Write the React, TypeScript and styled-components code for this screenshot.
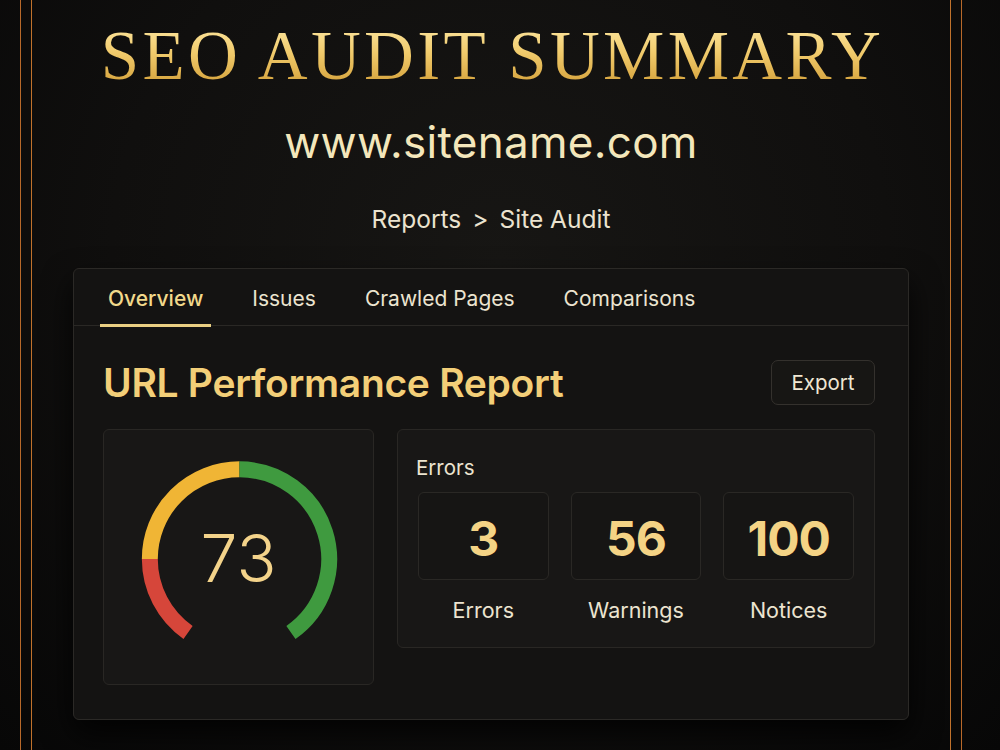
import styled, { createGlobalStyle } from "styled-components";

const GlobalStyle = createGlobalStyle`
  html, body {
    margin: 0;
    padding: 0;
    background: #0a0909;
  }
  body {
    font-family: Inter, "Noto Sans", "Liberation Sans", sans-serif;
  }
`;

const Page = styled.div`
  width: 1000px;
  height: 750px;
  overflow: hidden;
  background: radial-gradient(ellipse at 50% 35%, #171614 0%, #100f0e 55%, #070707 100%);
`;

const OuterFrame = styled.div`
  margin-left: 20px;
  width: 940px;
  height: 750px;
  border-left: 1.5px solid #b8692a;
  border-right: 1.5px solid #b8692a;
`;

const InnerFrame = styled.div`
  margin: 0 10px;
  height: 750px;
  border-left: 1.5px solid #c0722c;
  border-right: 1.5px solid #c0722c;
  display: flex;
  flex-direction: column;
  align-items: center;
`;

const Title = styled.h1`
  margin: 21px 0 0;
  font-family: "Liberation Serif", "DejaVu Serif", serif;
  font-weight: 400;
  font-size: 69px;
  line-height: 70px;
  letter-spacing: 3.3px;
  padding-left: 3px;
  background: linear-gradient(180deg, #fde9a6 0%, #f1cb6c 45%, #cf9a32 100%);
  -webkit-background-clip: text;
  background-clip: text;
  color: transparent;
`;

const SiteName = styled.div`
  margin-top: 26px;
  font-size: 44px;
  line-height: 50px;
  color: #f4e7bb;
  letter-spacing: 0.3px;
`;

const Crumbs = styled.div`
  margin-top: 37px;
  font-size: 24.5px;
  line-height: 30px;
  color: #ebe3cf;
  display: flex;
  gap: 11px;
`;

const Card = styled.div`
  margin-top: 34px;
  width: 836px;
  height: 452px;
  box-sizing: border-box;
  background: #141312;
  border: 1px solid #2b2926;
  border-radius: 6px;
  box-shadow: 0 14px 30px rgba(0, 0, 0, 0.8);
  display: flex;
  flex-direction: column;
`;

const TabBar = styled.div`
  display: flex;
  gap: 33px;
  padding: 0 26px;
  height: 56px;
  align-items: stretch;
  border-bottom: 1px solid #2a2825;
`;

const Tab = styled.div<{ $active?: boolean }>`
  display: flex;
  align-items: center;
  padding: 3px 8px 0;
  font-size: 21px;
  color: ${(p) => (p.$active ? "#f2d98b" : "#ece4d0")};
  font-weight: ${(p) => (p.$active ? 500 : 400)};
  border-bottom: 3px solid ${(p) => (p.$active ? "#e9cf82" : "transparent")};
  margin-bottom: -2px;
`;

const Body = styled.div`
  padding: 33px 33px 0 29px;
  display: flex;
  flex-direction: column;
`;

const HeadRow = styled.div`
  display: flex;
  justify-content: space-between;
  align-items: center;
`;

const Heading = styled.h2`
  margin: 0;
  font-size: 39px;
  font-weight: 600;
  color: #f3cf78;
  letter-spacing: -0.3px;
`;

const ExportButton = styled.button`
  width: 104px;
  height: 45px;
  background: #171614;
  border: 1px solid #34312d;
  border-radius: 7px;
  color: #efe7d3;
  font-family: inherit;
  font-size: 20.5px;
`;

const Panels = styled.div`
  margin-top: 23px;
  display: flex;
  gap: 23px;
  align-items: flex-start;
`;

const Panel = styled.div<{ $w: number; $h: number }>`
  width: ${(p) => p.$w}px;
  height: ${(p) => p.$h}px;
  box-sizing: border-box;
  background: #181716;
  border: 1px solid #292724;
  border-radius: 6px;
`;

const GaugeWrap = styled.div`
  position: relative;
  width: 100%;
  height: 100%;
  display: flex;
  align-items: center;
  justify-content: center;
`;

const GaugeValue = styled.div`
  position: absolute;
  left: 0;
  right: 0;
  top: 95px;
  text-align: center;
  font-size: 66px;
  font-weight: 300;
  color: #f3d38a;
  line-height: 66px;
`;

const ErrLabel = styled.div`
  padding: 25px 0 0 18px;
  font-size: 20.5px;
  color: #ece4d0;
`;

const StatGrid = styled.div`
  margin-top: 12px;
  padding: 0 20px;
  display: grid;
  grid-template-columns: repeat(3, 1fr);
  column-gap: 22px;
  row-gap: 17px;
`;

const StatBox = styled.div`
  height: 88px;
  box-sizing: border-box;
  border: 1px solid #2a2825;
  border-radius: 6px;
  background: #161514;
  display: flex;
  align-items: center;
  justify-content: center;
  padding-top: 4px;
  font-size: 48px;
  font-weight: 700;
  color: #f4d385;
  letter-spacing: -1px;
`;

const StatName = styled.div`
  text-align: center;
  font-size: 21.5px;
  color: #ece4d0;
`;

const arc = (cx: number, cy: number, r: number, a0: number, a1: number) => {
  const rad = (a: number) => (a * Math.PI) / 180;
  const x0 = cx + r * Math.cos(rad(a0));
  const y0 = cy + r * Math.sin(rad(a0));
  const x1 = cx + r * Math.cos(rad(a1));
  const y1 = cy + r * Math.sin(rad(a1));
  const large = a1 - a0 > 180 ? 1 : 0;
  return `M ${x0} ${y0} A ${r} ${r} 0 ${large} 1 ${x1} ${y1}`;
};

function Gauge() {
  const cx = 136;
  const cy = 129;
  const r = 90;
  return (
    <GaugeWrap>
      <svg width="270" height="255" viewBox="0 0 270 255">
        <path d={arc(cx, cy, r, 125, 180)} stroke="#d6463a" strokeWidth="16" fill="none" />
        <path d={arc(cx, cy, r, 180, 270)} stroke="#f0b535" strokeWidth="16" fill="none" />
        <path d={arc(cx, cy, r, 270, 415)} stroke="#3f9a3f" strokeWidth="16" fill="none" />
      </svg>
      <GaugeValue>73</GaugeValue>
    </GaugeWrap>
  );
}

const stats = [
  { n: "3", label: "Errors" },
  { n: "56", label: "Warnings" },
  { n: "100", label: "Notices" },
];

export default function App() {
  return (
    <>
      <GlobalStyle />
      <Page>
        <OuterFrame>
          <InnerFrame>
            <Title>SEO AUDIT SUMMARY</Title>
            <SiteName>www.sitename.com</SiteName>
            <Crumbs>
              <span>Reports</span>
              <span>&gt;</span>
              <span>Site Audit</span>
            </Crumbs>
            <Card>
              <TabBar>
                <Tab $active>Overview</Tab>
                <Tab>Issues</Tab>
                <Tab>Crawled Pages</Tab>
                <Tab>Comparisons</Tab>
              </TabBar>
              <Body>
                <HeadRow>
                  <Heading>URL Performance Report</Heading>
                  <ExportButton>Export</ExportButton>
                </HeadRow>
                <Panels>
                  <Panel $w={271} $h={256}>
                    <Gauge />
                  </Panel>
                  <Panel $w={478} $h={219}>
                    <ErrLabel>Errors</ErrLabel>
                    <StatGrid>
                      {stats.map((s) => (
                        <StatBox key={s.label}>{s.n}</StatBox>
                      ))}
                      {stats.map((s) => (
                        <StatName key={s.label + "l"}>{s.label}</StatName>
                      ))}
                    </StatGrid>
                  </Panel>
                </Panels>
              </Body>
            </Card>
          </InnerFrame>
        </OuterFrame>
      </Page>
    </>
  );
}
